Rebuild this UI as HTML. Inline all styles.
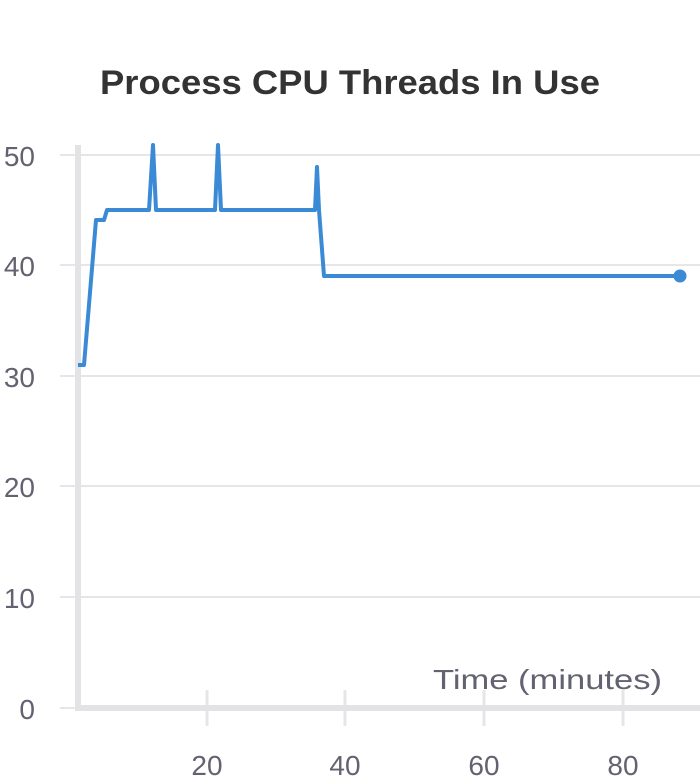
<!DOCTYPE html><html><head><style>body{margin:0;background:#fff;}svg{display:block}</style></head><body>
<svg width="700" height="784" xmlns="http://www.w3.org/2000/svg" font-family="Liberation Sans, sans-serif">
<text x="100" y="94" textLength="500" lengthAdjust="spacingAndGlyphs" font-size="34" font-weight="bold" fill="#333">Process CPU Threads In Use</text>
<g stroke="#e6e6e6" stroke-width="2">
<line x1="60" y1="155" x2="700" y2="155"/><line x1="60" y1="265" x2="700" y2="265"/><line x1="60" y1="376" x2="700" y2="376"/><line x1="60" y1="486" x2="700" y2="486"/><line x1="60" y1="597" x2="700" y2="597"/><line x1="60" y1="708" x2="80" y2="708"/>
<line x1="207" y1="690" x2="207" y2="726" stroke-width="3"/><line x1="345" y1="690" x2="345" y2="726" stroke-width="3"/><line x1="484" y1="690" x2="484" y2="726" stroke-width="3"/><line x1="623" y1="690" x2="623" y2="726" stroke-width="3"/>
</g>
<rect x="75" y="145" width="6" height="566" fill="#e3e3e6"/>
<rect x="75" y="705" width="625" height="6" fill="#e3e3e6"/>
<g font-size="28" fill="#626270">
<text x="35" y="166" text-anchor="end">50</text><text x="35" y="276" text-anchor="end">40</text><text x="35" y="387" text-anchor="end">30</text><text x="35" y="497" text-anchor="end">20</text><text x="35" y="608" text-anchor="end">10</text><text x="35" y="719" text-anchor="end">0</text>
<text x="207" y="775" text-anchor="middle">20</text><text x="345" y="775" text-anchor="middle">40</text><text x="484" y="775" text-anchor="middle">60</text><text x="623" y="775" text-anchor="middle">80</text>
<text x="433" y="689" textLength="229" lengthAdjust="spacingAndGlyphs">Time (minutes)</text>
</g>
<polyline fill="none" stroke="#3a8ad6" stroke-width="4" stroke-linejoin="round" points="78,365 84,365 96,220 104,220 107,210 149,210 153,145 156,210 215,210 218,145 221,210 315,210 317,167 319,210 324,276 680,276"/>
<circle cx="680" cy="276" r="6.5" fill="#3a8ad6"/>
</svg></body></html>
